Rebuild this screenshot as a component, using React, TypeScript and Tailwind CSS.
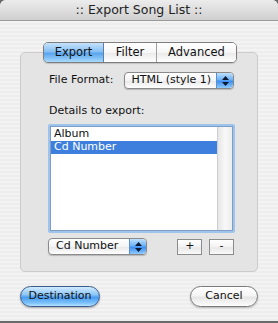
import React from "react";

const Stepper = () => (
  <div className="w-[17px] h-full rounded-r-[4px] bg-[linear-gradient(180deg,#bfe0ff_0%,#6cb2f5_45%,#3d8ff0_55%,#8fcaff_100%)] border-l border-[#5d8fc8] flex flex-col items-center justify-center gap-[2px]">
    <svg width="7" height="4" viewBox="0 0 7 4"><path d="M3.5 0 L7 4 L0 4 Z" fill="#0c1a33" /></svg>
    <svg width="7" height="4" viewBox="0 0 7 4"><path d="M0 0 L7 0 L3.5 4 Z" fill="#0c1a33" /></svg>
  </div>
);

export default function App() {
  return (
    <div className="w-[278px] h-[323px] bg-[#6a6a6a] font-['DejaVu_Sans',sans-serif] text-[11px] text-[#111] overflow-hidden">
      <div className="w-[278px] h-[321px] rounded-t-[6px] overflow-hidden flex flex-col bg-[repeating-linear-gradient(0deg,#ededed_0px,#ededed_2px,#f3f3f3_2px,#f3f3f3_4px)]">
        {/* Title bar */}
        <div className="h-[21px] shrink-0 bg-[linear-gradient(180deg,#ececec_0%,#dedede_50%,#cfcfcf_100%)] border-b border-[#9a9a9a] flex items-center justify-center text-[12.5px] text-[#222]">
          :: Export Song List ::
        </div>

        {/* Tabs + group box */}
        <div className="mt-[21px] flex flex-col">
          <div className="relative z-10 flex justify-center">
            <div className="flex h-[21px] ml-[2px] rounded-[5px] border border-[#7d7d7d] overflow-hidden shadow-[0_1px_1px_rgba(0,0,0,0.15)]">
              <div className="w-[60px] flex items-center justify-center bg-[linear-gradient(180deg,#c6e2fb_0%,#87c0f4_45%,#5aa5ee_55%,#a8dafd_100%)] border-r border-[#5e7fa8] text-[11.5px]">
                Export
              </div>
              <div className="w-[53px] flex items-center justify-center bg-[linear-gradient(180deg,#ffffff_0%,#f6f6f6_50%,#ebebeb_55%,#ffffff_100%)] border-r border-[#a0a0a0] text-[11.5px]">
                Filter
              </div>
              <div className="w-[79px] flex items-center justify-center bg-[linear-gradient(180deg,#ffffff_0%,#f6f6f6_50%,#ebebeb_55%,#ffffff_100%)] text-[11.5px]">
                Advanced
              </div>
            </div>
          </div>

          <div className="mx-[20px] -mt-[11px] h-[220px] rounded-[5px] border border-[#cbcbcb] bg-[#e4e4e4] pl-[27px] pr-[23px] pt-[19px] flex flex-col">
            <div className="flex items-center h-[17px]">
              <div className="w-[76px] pl-[1px] text-[11px]">File Format:</div>
              <div className="w-[111px] h-[17px] flex rounded-[4px] border border-[#8a8a8a] bg-[linear-gradient(180deg,#ffffff_0%,#f4f4f4_50%,#e9e9e9_55%,#ffffff_100%)] overflow-hidden shadow-[0_1px_1px_rgba(0,0,0,0.2)]">
                <div className="flex-1 flex items-center pl-[7px] text-[11px]">HTML (style 1)</div>
                <Stepper />
              </div>
            </div>

            <div className="mt-[15px] pl-[1px] text-[11px] leading-[14px]">Details to export:</div>

            <div className="mt-[6px] w-[187px] h-[109px] rounded-[2px] bg-[#9fc4ec] p-[2px]">
              <div className="w-full h-full border border-[#7f9ec6] bg-white flex">
                <div className="flex-1 pt-[1px]">
                  <div className="h-[13px] pl-[3px] flex items-center text-[11px]">Album</div>
                  <div className="h-[13px] pl-[3px] flex items-center text-[11px] bg-[#3e7fdd] text-white">Cd Number</div>
                </div>
                <div className="w-[15px] bg-[linear-gradient(90deg,#e6e6e6_0%,#f8f8f8_50%,#ececec_100%)] border-l border-[#d0d0d0]" />
              </div>
            </div>

            <div className="mt-[5px] flex items-center h-[17px]">
              <div className="w-[100px] h-[17px] flex rounded-[4px] border border-[#8a8a8a] bg-[linear-gradient(180deg,#ffffff_0%,#f4f4f4_50%,#e9e9e9_55%,#ffffff_100%)] overflow-hidden shadow-[0_1px_1px_rgba(0,0,0,0.2)]">
                <div className="flex-1 flex items-center pl-[7px] text-[11px]">Cd Number</div>
                <Stepper />
              </div>
              <div className="ml-[30px] w-[25px] h-[16px] border border-[#8c8c8c] bg-[linear-gradient(180deg,#ffffff_0%,#f2f2f2_50%,#e8e8e8_55%,#fafafa_100%)] flex items-center justify-center text-[11px]">+</div>
              <div className="ml-[7px] w-[25px] h-[16px] border border-[#8c8c8c] bg-[linear-gradient(180deg,#ffffff_0%,#f2f2f2_50%,#e8e8e8_55%,#fafafa_100%)] flex items-center justify-center text-[11px]">-</div>
            </div>
          </div>
        </div>

        {/* Buttons */}
        <div className="mt-[14px] mx-[20px] flex justify-between">
          <div className="w-[80px] h-[21px] rounded-full border border-[#3a5b8c] bg-[linear-gradient(180deg,#d3ebff_0%,#8cc6f7_40%,#4a9cf0_55%,#7fc3fb_85%,#b8e4ff_100%)] flex items-center justify-center text-[11px] shadow-[0_1px_2px_rgba(0,0,0,0.3)]">
            Destination
          </div>
          <div className="w-[68px] h-[21px] rounded-full border border-[#7a7a7a] bg-[linear-gradient(180deg,#ffffff_0%,#f5f5f5_45%,#e6e6e6_55%,#fdfdfd_100%)] flex items-center justify-center text-[11px] shadow-[0_1px_2px_rgba(0,0,0,0.25)]">
            Cancel
          </div>
        </div>
      </div>
    </div>
  );
}
